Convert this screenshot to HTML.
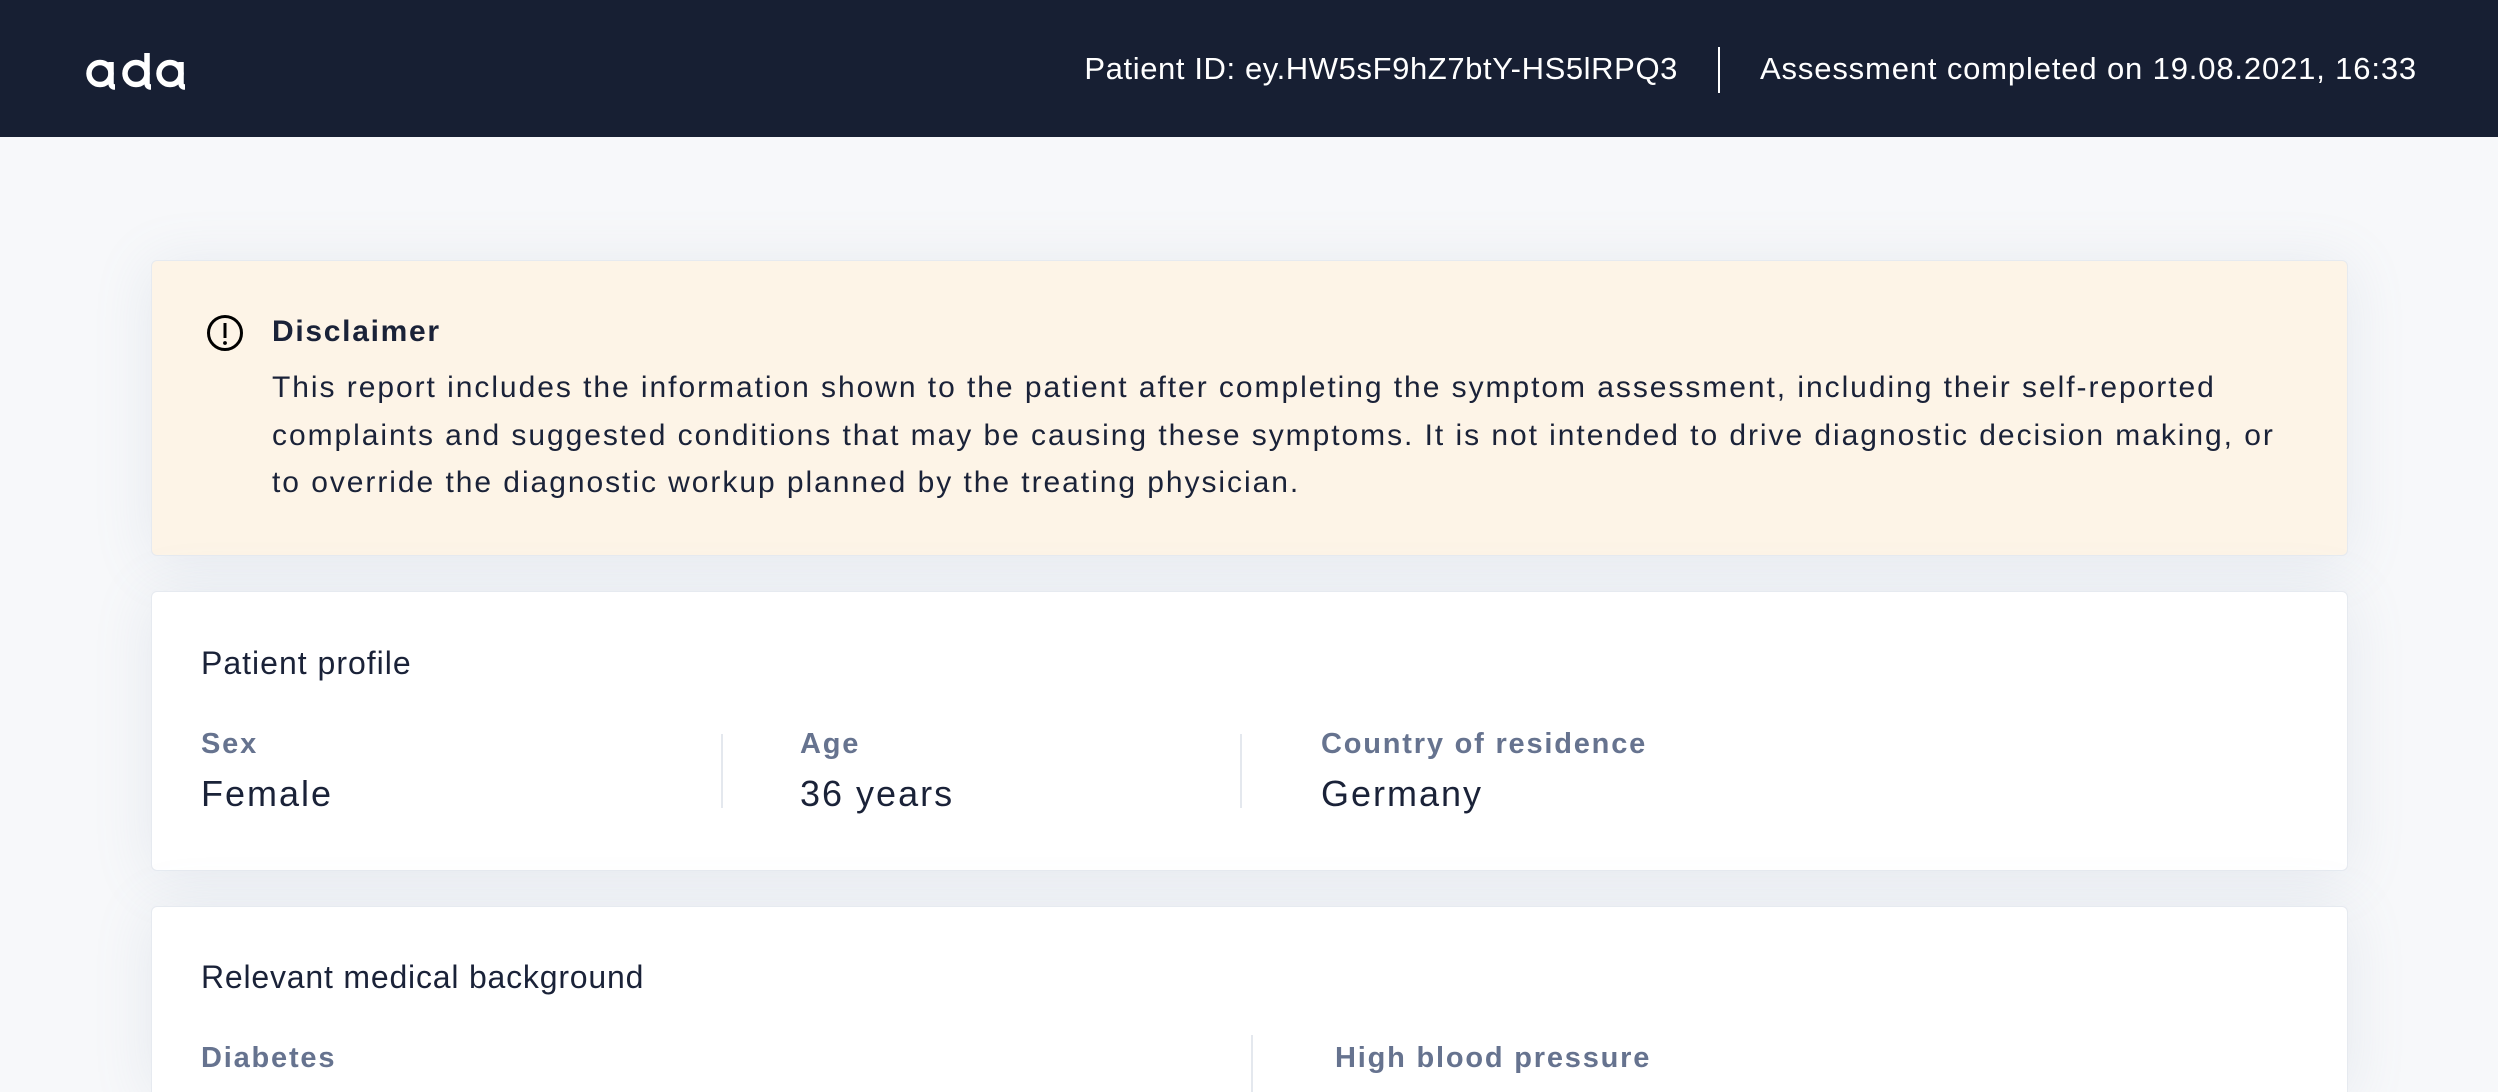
<!DOCTYPE html>
<html style="width:2498px;height:1092px;overflow:hidden"><head><meta charset="utf-8"><style>
*{margin:0;padding:0;box-sizing:border-box}
body{width:2498px;height:1092px;overflow:hidden;background:#f7f8fa;font-family:"Liberation Sans",sans-serif;color:#1a2238;position:relative}
.hdr{position:absolute;left:0;top:0;width:2498px;height:137px;background:#171f33}
.a{position:absolute;white-space:nowrap}
.card{position:absolute;left:151px;width:2197px;border-radius:6px;border:1px solid #e6eaf0;box-shadow:0 6px 60px rgba(120,140,170,0.14)}
.lab{font-size:29px;font-weight:bold;color:#66738f;line-height:36px;letter-spacing:1.8px}
.val{font-size:36px;line-height:44px;letter-spacing:2px}
.vd{position:absolute;width:2px;background:#e4e8ee}
.body{font-size:30px;line-height:47.5px;letter-spacing:1.95px}
</style></head><body>
<div class="hdr">
<svg class="a" style="left:0;top:0" width="300" height="137" viewBox="0 0 300 137">
<g fill="none" stroke="#fff" stroke-width="5.5">
<circle cx="100" cy="73.5" r="11"/><path d="M111 62 V83 Q111 87 115 87"/>
<circle cx="136" cy="73.5" r="11"/><path d="M147 53 V83 Q147 87 151 87"/>
<circle cx="170" cy="73.5" r="11"/><path d="M181 62 V83 Q181 87 185 87"/>
</g></svg>
<div class="a" style="right:820px;top:49px;font-size:31px;line-height:40px;color:#fff;letter-spacing:0.6px">Patient ID: ey.HW5sF9hZ7btY-HS5lRPQ3</div>
<div class="a" style="left:1718px;top:47px;width:2px;height:46px;background:#fff"></div>
<div class="a" style="right:81px;top:49px;font-size:31px;line-height:40px;color:#fff;letter-spacing:0.85px">Assessment completed on 19.08.2021, 16:33</div>
</div>

<div class="card" style="top:260px;height:296px;background:#fdf4e7"></div>
<svg class="a" style="left:205px;top:313px" width="40" height="40" viewBox="0 0 40 40">
<circle cx="20" cy="20" r="16.5" fill="none" stroke="#000" stroke-width="3"/>
<path d="M20 10 V25" stroke="#000" stroke-width="3"/><circle cx="20" cy="30" r="1.9" fill="#000"/></svg>
<div class="a" style="left:272px;top:312px;font-size:30px;line-height:40px;font-weight:bold;letter-spacing:1.7px">Disclaimer</div>
<div class="a body" style="left:272px;top:364px">This report includes the information shown to the patient after completing the symptom assessment, including their self-reported</div>
<div class="a body" style="left:272px;top:411.5px">complaints and suggested conditions that may be causing these symptoms. It is not intended to drive diagnostic decision making, or</div>
<div class="a body" style="left:272px;top:459px">to override the diagnostic workup planned by the treating physician.</div>

<div class="card" style="top:591px;height:280px;background:#fff"></div>
<div class="a" style="left:201px;top:643px;font-size:32px;line-height:40px;letter-spacing:1px">Patient profile</div>
<div class="a lab" style="left:201px;top:726px">Sex</div>
<div class="a val" style="left:201px;top:772px">Female</div>
<div class="vd" style="left:721px;top:734px;height:74px"></div>
<div class="a lab" style="left:800px;top:726px">Age</div>
<div class="a val" style="left:800px;top:772px">36 years</div>
<div class="vd" style="left:1240px;top:734px;height:74px"></div>
<div class="a lab" style="left:1321px;top:726px">Country of residence</div>
<div class="a val" style="left:1321px;top:772px">Germany</div>

<div class="card" style="top:906px;height:186px;background:#fff;border-bottom:none;border-radius:6px 6px 0 0"></div>
<div class="a" style="left:201px;top:957px;font-size:32px;line-height:40px;letter-spacing:0.8px">Relevant medical background</div>
<div class="a lab" style="left:201px;top:1040px">Diabetes</div>
<div class="vd" style="left:1251px;top:1035px;height:57px"></div>
<div class="a lab" style="left:1335px;top:1040px">High blood pressure</div>
</body></html>
